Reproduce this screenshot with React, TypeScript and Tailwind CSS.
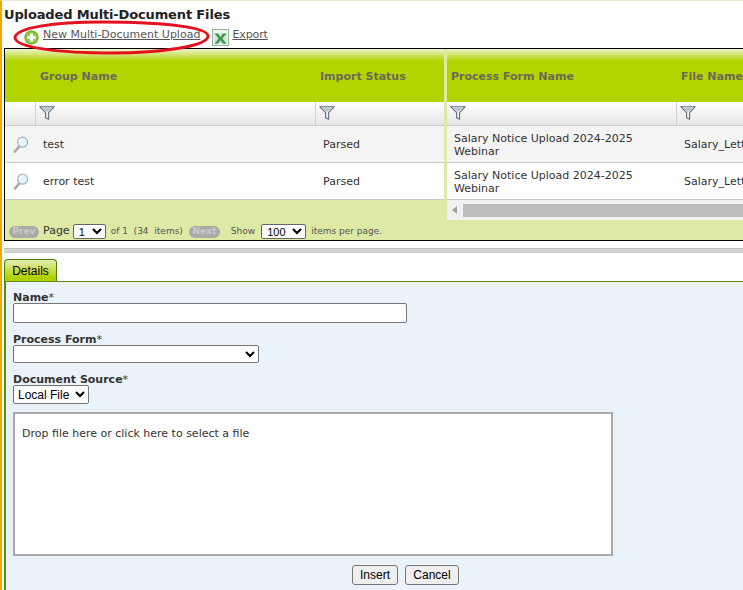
import React from "react";

const verdana = "font-['DejaVu_Sans','Verdana',sans-serif]";
const arial = "font-['Liberation_Sans','Arial',sans-serif]";

function FilterIcon() {
  return (
    <svg width="16" height="14" viewBox="0 0 16 14" className="block">
      <path d="M0.7 0.7H15.3L9.6 6.6V13.2L6.6 11.8V6.6Z" fill="#eef3f6" stroke="#5f6c74" strokeWidth="1.1" strokeLinejoin="round" />
      <path d="M3.4 2H12.6L8.8 5.4H7.2Z" fill="#b4c4cd" />
    </svg>
  );
}

function MagnifierIcon() {
  return (
    <svg width="16" height="17" viewBox="0 0 16 17" className="block">
      <path d="M2 15.5L6.2 10.4" stroke="#a9a9a9" strokeWidth="2.6" strokeLinecap="round" />
      <circle cx="9.6" cy="6.2" r="5" fill="#e3f2fb" stroke="#a6b4bb" strokeWidth="1.2" />
      <path d="M6.5 6.4C6.6 4.7 7.8 3.4 9.4 3.2" stroke="#ffffff" strokeWidth="1.4" fill="none" />
    </svg>
  );
}

function PlusIcon() {
  return (
    <svg width="15" height="15" viewBox="0 0 15 15" className="block">
      <circle cx="7.5" cy="7.5" r="7.2" fill="#76b82a" />
      <circle cx="7.5" cy="7.5" r="5.4" fill="#93cd4b" />
      <path d="M7.5 3.4V11.6M3.4 7.5H11.6" stroke="#ffffff" strokeWidth="2.8" />
    </svg>
  );
}

function ExcelIcon() {
  return (
    <svg width="17" height="17" viewBox="0 0 17 17" className="block">
      <rect x="0.5" y="0.5" width="16" height="16" fill="#eef4ef" stroke="#9ab09b" />
      <path d="M2 4H15V15H2Z" fill="#d5e6d8" />
      <path d="M2.5 4.5L6 4.5L8.5 8L11 4.5H14.5L10.4 9.6L14.5 14.8H11L8.5 11.2L6 14.8H2.5L6.6 9.6Z" fill="#3f9a50" />
    </svg>
  );
}

function HeaderCell({ label, className }: { label: string; className: string }) {
  return (
    <div className={`shrink-0 pt-[21px] text-[11px] leading-[13px] font-bold text-[#6a6a58] ${className}`}>{label}</div>
  );
}

function FilterCell({ className, empty }: { className: string; empty?: boolean }) {
  return (
    <div className={`shrink-0 h-full border-r border-[#cfcfcf] pl-[3px] pt-[4px] ${className}`}>
      {!empty && <FilterIcon />}
    </div>
  );
}

const headerBg = "bg-[linear-gradient(#eef3cf_0px,#b4d400_12px,#b4d400_100%)]";
const filterBg = "bg-[linear-gradient(#ffffff,#e6e6e6)]";

function LeftRow({ name, bg }: { name: string; bg: string }) {
  return (
    <div className={`flex h-[37px] items-center border-b border-[#cccccc] text-[11px] text-[#333333] ${bg}`}>
      <div className="w-[38px] shrink-0 pl-[8px]">
        <MagnifierIcon />
      </div>
      <div className="w-[280px] shrink-0 pt-[2px]">{name}</div>
      <div className="pt-[2px]">Parsed</div>
    </div>
  );
}

function RightRow({ bg }: { bg: string }) {
  return (
    <div className={`flex h-[37px] items-center border-b border-[#cccccc] text-[11px] leading-[13px] text-[#333333] ${bg}`}>
      <div className="w-[230px] shrink-0 pt-[2px] pl-[7px]">
        Salary Notice Upload 2024-2025
        <br />
        Webinar
      </div>
      <div className="pl-[7px] whitespace-nowrap">Salary_Letter.pdf</div>
    </div>
  );
}

function Pill({ label, className }: { label: string; className: string }) {
  return (
    <span className={`flex h-[12px] items-center justify-center rounded-full bg-[#aaaaaa] text-[9px] font-bold text-[#cccccc] ${className}`}>{label}</span>
  );
}

function FieldLabel({ label }: { label: string }) {
  return (
    <div className="text-[11px] leading-[13px] text-[#333333]">
      <span className="font-bold">{label}</span>*
    </div>
  );
}

export default function App() {
  return (
    <div className={`relative flex h-[590px] w-[743px] flex-col overflow-hidden border-t border-[#e6ecd6] border-l-2 border-l-[#f5a800] bg-white pl-[2px] ${verdana}`}>
      {/* heading + actions */}
      <h1 className="mt-[6px] h-[15px] text-[13px] leading-[15px] font-bold tracking-[-0.14px] text-[#222222]">Uploaded Multi-Document Files</h1>
      <div className="mt-[7px] flex h-[20px] items-start text-[11px] leading-[13px] text-[#555555]">
        <div className="mt-[1px] ml-[20px]">
          <PlusIcon />
        </div>
        <a className="mt-[-1px] ml-[4px] underline">New Multi-Document Upload</a>
        <div className="ml-[12px]">
          <ExcelIcon />
        </div>
        <a className="mt-[-1px] ml-[3px] tracking-[-0.1px] underline">Export</a>
      </div>

      {/* hand drawn highlight over the link */}
      <svg width="200" height="36" viewBox="0 0 200 36" className="absolute top-[19px] left-[10px]">
        <path d="M3 17C5 8 40 2 90 2C150 2 196 7 196 16C196 26 150 33 100 33C50 33 2 28 3 17Z" fill="none" stroke="#e3101f" strokeWidth="3" />
      </svg>

      {/* grid */}
      <div className="mt-[-1px] h-[193px] w-[760px] shrink-0 border border-r-0 border-black bg-[#dde9a5]">
        <div className="flex h-[171px]">
          <div className="w-[439px] shrink-0">
            <div className={`flex h-[53px] ${headerBg}`}>
              <HeaderCell label="Group Name" className="w-[315px] pl-[35px]" />
              <HeaderCell label="Import Status" className="" />
            </div>
            <div className={`flex h-[24px] border-b border-[#cccccc] ${filterBg}`}>
              <FilterCell className="w-[31px]" empty />
              <FilterCell className="w-[280px]" />
              <FilterCell className="w-[128px] border-r-0" />
            </div>
            <LeftRow name="test" bg="bg-[#f4f4f4]" />
            <LeftRow name="error test" bg="bg-white" />
          </div>
          <div className="w-[3px] shrink-0 bg-[#dde9a5]" />
          <div className="min-w-0 flex-1 overflow-hidden">
            <div className={`flex h-[53px] ${headerBg}`}>
              <HeaderCell label="Process Form Name" className="w-[230px] pl-[4px]" />
              <HeaderCell label="File Name" className="pl-[4px]" />
            </div>
            <div className={`flex h-[24px] border-b border-[#cccccc] ${filterBg}`}>
              <FilterCell className="w-[230px]" />
              <FilterCell className="w-[120px]" />
            </div>
            <RightRow bg="bg-[#f4f4f4]" />
            <RightRow bg="bg-white" />
            <div className="flex h-[20px] items-center bg-[#f1f1f1] pl-[5px]">
              <span className="h-0 w-0 border-y-[4px] border-r-[5px] border-y-transparent border-r-[#a0a0a0]" />
              <div className="mt-[1px] ml-[6px] h-[13px] flex-1 bg-[#bdbdbd]" />
            </div>
          </div>
        </div>
        {/* pager */}
        <div className="flex h-[20px] items-center pt-[3px] pl-[4px] text-[9px] text-[#555555]">
          <Pill label="Prev" className="w-[30px]" />
          <span className="ml-[4px] text-[11px] text-[#333333]">Page</span>
          <select className={`ml-[3px] h-[15px] w-[33px] rounded-[2px] border border-[#666666] bg-white pl-[1px] text-[11px] text-black ${arial}`}>
            <option>1</option>
          </select>
          <span className="ml-[5px] whitespace-pre">of 1  (34  items)</span>
          <span className="ml-[6px]">
            <Pill label="Next" className="w-[31px]" />
          </span>
          <span className="ml-[11px]">Show</span>
          <select className={`ml-[6px] h-[15px] w-[45px] rounded-[2px] border border-[#666666] bg-white pl-[1px] text-[11px] text-black ${arial}`}>
            <option>100</option>
          </select>
          <span className="ml-[5px]">items per page.</span>
        </div>
      </div>

      {/* splitter */}
      <div className="mt-[7px] h-[5px] w-full shrink-0 border-t border-b border-t-[#bdbdbd] border-b-[#c8c8c8] bg-[#d6d6d6]" />

      {/* tabs */}
      <div className="mt-[6px] flex h-[22px] shrink-0 items-end">
        <div className={`flex h-[22px] w-[53px] items-center justify-center rounded-t-[4px] border border-b-0 border-[#4e7d00] bg-[linear-gradient(#e3eeb4,#b0d000_85%)] text-[12px] text-black ${arial}`}>
          Details
        </div>
      </div>

      {/* details panel */}
      <div className="flex min-h-0 flex-1 flex-col border-t border-l-2 border-[#5d8c12] bg-[#eaf2fa] pt-[9px] pl-[7px]">
        <FieldLabel label="Name" />
        <input className="mt-[-1px] h-[20px] w-[394px] shrink-0 rounded-[2px] border border-[#767676] bg-white" />
        <div className="mt-[10px]">
          <FieldLabel label="Process Form" />
        </div>
        <select className={`mt-[-1px] h-[18px] w-[246px] shrink-0 rounded-[2px] border border-[#767676] bg-white text-[12px] ${arial}`}>
          <option></option>
        </select>
        <div className="mt-[10px]">
          <FieldLabel label="Document Source" />
        </div>
        <select className={`mt-[-1px] h-[19px] w-[76px] shrink-0 rounded-[2px] border border-[#767676] bg-white text-[12px] text-black ${arial}`}>
          <option>Local File</option>
        </select>
        <div className="mt-[8px] h-[144px] w-[600px] shrink-0 border-2 border-[#aaaaaa] bg-white pt-[13px] pl-[7px] text-[11px] leading-[13px] text-[#333333]">
          Drop file here or click here to select a file
        </div>
        <div className={`mt-[9px] flex gap-[7px] pl-[339px] text-[12px] text-black ${arial}`}>
          <button className="h-[20px] w-[46px] rounded-[3px] border border-[#767676] bg-[#efefef]">Insert</button>
          <button className="h-[20px] w-[54px] rounded-[3px] border border-[#767676] bg-[#efefef]">Cancel</button>
        </div>
      </div>
    </div>
  );
}
